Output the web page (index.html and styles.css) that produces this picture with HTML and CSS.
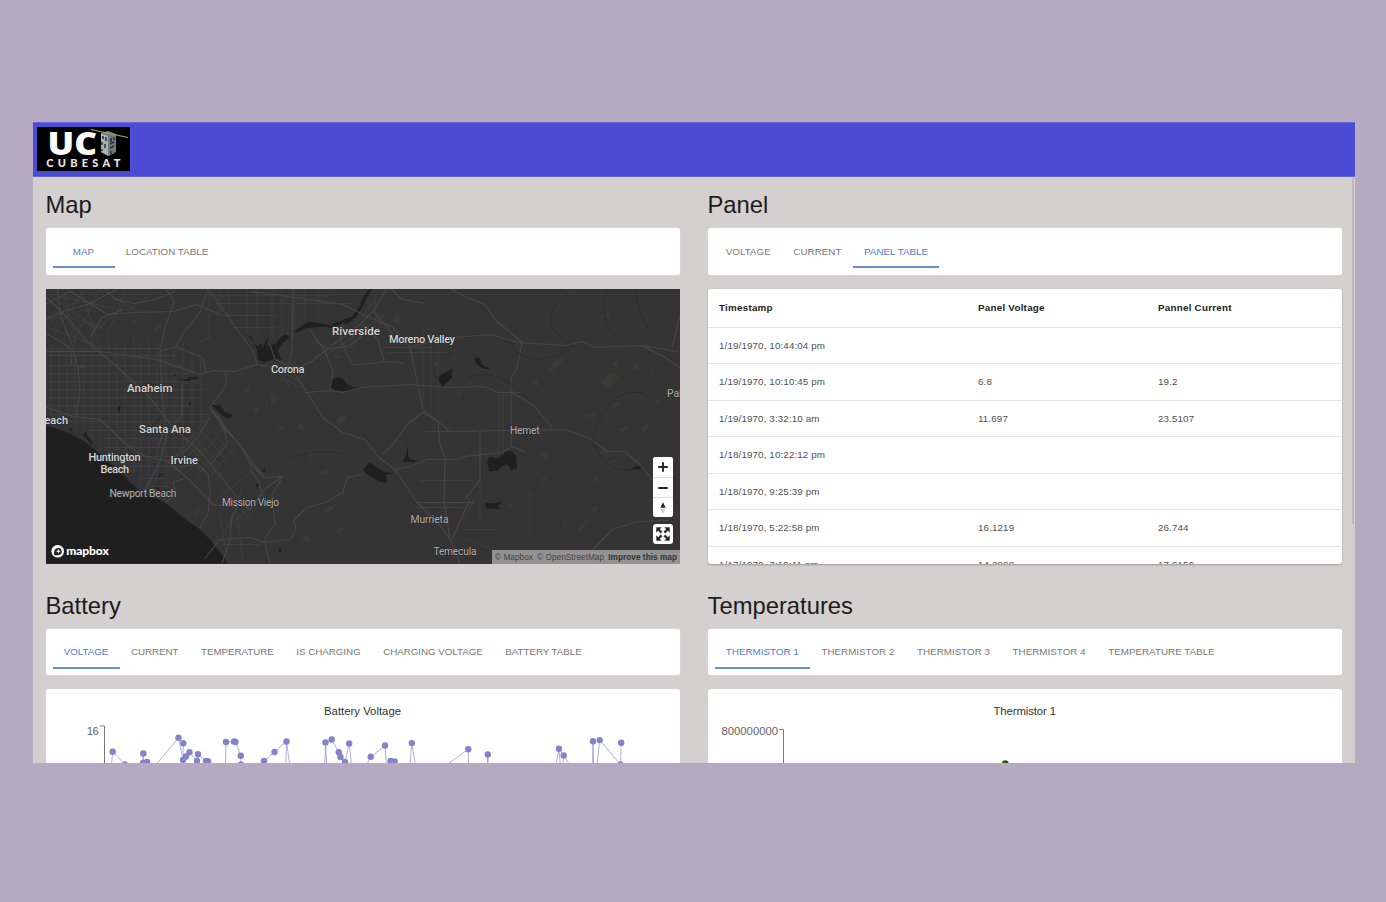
FILE: index.html
```html
<!DOCTYPE html>
<html lang="en">
<head>
<meta charset="utf-8">
<title>UCI CubeSat</title>
<link rel="stylesheet" href="styles.css">
</head>
<body>
<div class="app">
  <header class="topbar">
    <svg class="logo" viewBox="0 0 93 44">
      <rect width="93" height="44" fill="#000"/>
      <text class="logo-uc" x="10.500" y="27.500" textLength="49.500" lengthAdjust="spacingAndGlyphs">UC</text>
      <text class="logo-name" x="9.300" y="40" textLength="74">CUBESAT</text>
      <path d="M64 6l7-2 8 3v18l-7 4-8-4z" fill="#6d7b80"/>
      <path d="M64 6l7 3v20l-7-4z" fill="#a5b2af"/>
      <path d="M66 9v3m3-2v4m-4 1v3m3-1v4m-3 1v2m9-13v4m3-5v3m-4 4l4-2m-4 6l4-2m-3 5v3" stroke="#26322f" stroke-width="1.500"/>
      <path d="M54 2.500L91 10.500" stroke="#a8aa5b" stroke-width="1.200"/>
    </svg>
  </header>
  <main class="grid">
    <section class="panel">
      <h2>Map</h2>
      <nav class="tabs"><a class="tab active">Map</a><a class="tab">Location Table</a></nav>
      <div class="map">
        <svg class="map-art" viewBox="46 289.500 634.500 275" preserveAspectRatio="none">
          <rect x="45" y="288" width="637" height="278" fill="#343434"/>
          <g class="hills">
            <path d="M130 322l8-4-2 6zM152 330l10-6-5 9zM196 342l18-7-12 8zM243 390l8-5-3 9zM252 410l9-3-5 8zM270 398l4-6 3 9-5 6zM276 430l7-5 2 7zM296 428l5-6 4 9zM306 455l6-5 2 10-6-3zM316 475l10-7 4 6zM335 423l9-9 3 6-8 5zM300 540l8-4 2 7zM320 512l18-9-7 9zM335 530l11-3-7 8zM392 320l5-6 4 6-3 6zM433 365l9-6-5 9zM450 361l8-6-4 7z"/>
            <path d="M549 365l15-6-5 7zM530 385l5-7 5 8zM547 370l14-7-11 11zM596 320l12-8 4 5zM600 385l10-13 9 5-10 13zM585 416l15-4-7 6zM610 407l12-7-4 7zM616 430l14-4-6 6zM612 365l7-6-2 9zM632 371l4-10 4 9zM650 376l5-10-3 14zM538 455l10-2-2 7zM540 480l8-3-4 7zM562 525l6-7-3 11zM577 533l11-16-7 17zM588 509l12-3-5 6zM590 480l7-4 2 6zM598 452l9-4-2 7zM605 463l14-4-8 6zM640 430l9-7-4 10zM655 402l9-7-7 10z"/>
            <path d="M194 513l6-6-2 9zM181 526l6-6-2 8zM211 543l7-4-3 7zM280 370l7 3-6 4zM334 355l9 2-7 3zM455 394l9-5-4 7zM508 505l7-4-5 7z"/>
          </g>
          <g class="water">
            <path d="M45 425l25 9 15 8 18 15 16 15 21 20 25 11 18 15 17 12 11 11 17 23H45z"/>
            <path d="M66 427l3 4 3-4-1 6zM82 434l4-2 2 5 5 5-1 4zM117 410l4-6-2 10zM159 475l6-1-7 3-1 8 3 6 4 4-5-1-4-6 3-4zM178 379l8 1 5-3 8 1-8 3-7 1zM211 405l9 1 4 6 9 4-5 3-6-3-6-6zM173 376l2-3 1 4zM188 404l5-2-3 5zM155 422l5-4-4 7z"/>
            <path d="M248 336l4 2 2 6 4 3 3-4 2 5 5-12-1 11 7-3 4 3 5-5-5 9 1 4 3 6-5-2-4 1-9 3-6-3-1-10-4-8z"/>
            <path d="M275 347l3-6 6-6 4 1 1 3-6 4-5 5zM294 332l10-7 5-3 12 2 11 2v2l-15-1-11 2-9 4zM332 325l12-5 8-3 9-12 2 1-7 12-7 5-16 4z"/>
            <path d="M360 304l5-9 5-7 3 1-5 7-5 10z"/>
            <path d="M331 380l8-2 5 2 3 5 7 3 7-1-12 5-13-1-6-3zM436 378l16-9v9l-9 9zM475 359l4-1 4 8 8 4-8-1-7-5zM363 470l6-7 14 9 11 2-8 1 1 9-8-2-13-8zM402 463l4-7 2-11v12l3 3 7 1-5 2-10-1zM487 461l3-4 8 2 5-5 7-3 6 5 1 13-6 2-3-6-6 2-4 4-9 1zM485 503l10 1 7-2-4 5 2 3-14-1zM630 470l5-3 7-1-2 4zM278 550l4-1-2 5zM262 471l4-3-2 5zM256 485l3-2-2 7z"/>
          </g>
          <g class="streets">
            <path d="M47 349H160M45 356H175M45 366H183M45 374H190M45 382H198M45 390H206M45 398H201M45 406H195M45 415H208M69 422H205M83 431H193M100 439H190M101 448H185M110 457H179M124 467H180M138 479H170M151 487H168"/>
            <path d="M51 345V417M59 348V424M67 345V425M75 346V430M84 348V435M92 325V444M100 334V453M109 338V458M117 345V463M125 340V471M134 337V477M141 345V485M149 338V491M157 340V495M166 342V488M174 348V471M183 342V459M192 347V443M201 359V429"/>
            <path d="M178 449l28 28M185 442l27 30M192 435l28 31M199 429l25 29M174 458l31-37M181 465l32-36M188 472l30-36M195 479l29-36M203 486l28-34M217 437l20 21M218 472l12 12M47 294l48 34M50 323l40-34M54 336l30-47M73 343l27-53M91 337l47-46M127 311l33-22M107 336l19-47M55 296l60 13M54 312l52 18M46 327l55 21M63 289l13 54M82 293l16 50M100 290l42 24M221 489l30 32M217 500l32-26M229 526l15-42M236 530l20-22M207 296H330M215 304H350M220 316H277M232 328H276M209 289V340M219 289V317M229 289V318M247 289V334M257 289V333M272 289V340M282 289V336M294 289V331M305 289V323M318 289V323"/>
            <path d="M375 290v35M385 315l-65 45M382 348h50M388 353h60M423 325v85M431 338v78M438 343v78M425 432h51M420 481h52M416 508h46M499 390v65M503 389v67M480 455v70M497 393h28M530 490v50M461 523l20-33M465 530h30M467 540l24 10M220 516l8 48M236 508l7 56M225 530l35-30M222 545h38M283 372l18 12M280 378l22 10M275 366l15 22M355 325l20-25M368 300l12 20M380 320v15M332 348h20v-12"/>
          </g>
          <g class="roads">
            <path d="M47 298L67 318 90 345 117 367 150 398 173 428 200 452 227 485 240 502 232 517 230 540 222 564M45 407L73 417 100 420 123 442 140 455 167 462 187 478 213 505 237 508M45 352H100L157 360 180 368 200 375 213 371 235 372 257 365 285 370 300 367 310 363 360 325 373 312 387 288"/>
            <path d="M57 288L61 318 72 345 78 370 80 392 76 417M45 305L70 292 87 302 107 315 133 313 173 312 197 305 220 315M207 288L218 303 238 331 253 352 257 365M165 288L174 302 165 328 160 352 162 395 165 425 158 450M182 382V415L167 435 160 462 144 492M160 352L176 347 183 334 200 313 208 289M175 347L203 358 206 373M226 373L226 386 210 408 225 432 227 445 210 465M210 408L247 455 264 478 283 477 272 495 275 525 264 540 270 564M210 418L198 437 187 450 167 462M187 478L173 483 176 495 165 503M180 468l16-4 12 10 2 18-2 22-8 14M240 502l10 8 14-20 18-13M264 478L250 464 240 445 225 430 218 416"/>
            <path d="M105 289L115 300 135 304 155 300 175 292M45 320L63 312 87 305 117 290M45 333L70 348 72 366 86 368M91 336L102 318 123 310"/>
            <path d="M293 288L292 348 289 367 300 382 308 395 323 418 343 433 365 440 378 457 395 470 417 503 437 522 450 540 460 564M250 292L310 300 343 305 363 315 393 328 410 348 423 410 438 422 440 445 445 458 444 502 450 540M363 325L378 340 384 362M343 323L340 340 352 365 370 364 390 362 405 364M289 367L275 360 270 345"/>
            <path d="M305 393L330 391 343 393 360 388 410 385 447 388 485 387 498 393 512 393 535 407 552 428M310 330L325 352 333 372 330 391M382 455L393 445 407 425 423 413 438 422 450 432 508 431 565 430 588 438 608 452 625 452 642 467 652 480 678 517M395 470L410 467 427 460 457 460 465 457 502 453 512 447 525 452M465 297L485 305 495 320 522 343 517 368 511 378V448M410 348l28-8 17-2L490 335 518 343 565 346 582 342 595 348 642 346 678 352M642 346L665 358 681 369M593 550L612 530 638 522 668 521M672 348L680 315M465 500L480 480V435M417 503H475M452 540L463 515 470 500"/>
            <path d="M205 559L220 540 250 538 265 543 290 540 296 530 294 520 307 508 325 503 343 493 347 478 362 475M264 500L258 480 250 470M390 288L402 300 425 304M450 289L465 297M373 312L385 325 393 335M316 342L330 350 352 345 363 335"/>
          </g>
          <g class="terrain"><path d="M569 294q-23 16-17 35 12 12 22 19M608 289q-12 26 8 49M635 289q2 28 20 49M650 397q-38-19-58 43M570 350q-43 23-62-9M466 378q34-12 68 27M592 440q14 35 39 30M286 460q44-15 62-2"/></g>
          <g class="labels">
            <text x="332" y="335.500" textLength="48" lengthAdjust="spacingAndGlyphs">Riverside</text><text x="389" y="343" textLength="66">Moreno Valley</text>
            <text x="271" y="373" textLength="33.500">Corona</text><text x="127" y="392.500" textLength="45.500" lengthAdjust="spacingAndGlyphs">Anaheim</text>
            <text x="139" y="433.500" textLength="52" lengthAdjust="spacingAndGlyphs">Santa Ana</text><text x="44.500" y="424" textLength="23.500">each</text>
            <text x="88.500" y="461.500" textLength="52">Huntington</text><text x="100.500" y="473" textLength="28.500">Beach</text>
            <text x="170.500" y="464" textLength="27.500">Irvine</text>
            <g class="minor"><text x="109.500" y="497" textLength="67">Newport Beach</text><text x="222" y="506.500" textLength="57">Mission Viejo</text>
            <text x="510" y="434" textLength="29.500">Hemet</text><text x="410.500" y="523.500" textLength="38">Murrieta</text><text x="433.500" y="555" textLength="43">Temecula</text><text x="667" y="397">Pal</text></g>
          </g>
          <circle cx="57.700" cy="551.800" r="6.300" fill="#fff"/><path d="M54.200 555.700c-.6-4.200.8-7.100 4.100-7.100 2 0 3.500 1.500 3.500 3.400 0 3.200-3.400 4.300-7.600 3.700z" fill="#222"/><path d="M58.400 549.400l.7 1.600 1.600.7-1.600.7-.7 1.600-.7-1.600-1.600-.7 1.600-.7z" fill="#fff"/>
          <text class="brand" x="66.300" y="555.500" textLength="42.500">mapbox</text>
        </svg>
        <div class="controls">
          <div class="zoomset">
            <button aria-label="Zoom in"><svg viewBox="0 0 20 20"><path d="M10 6v8M6 10h8" stroke="#222" stroke-width="1.900" stroke-linecap="round"/></svg></button>
            <button aria-label="Zoom out"><svg viewBox="0 0 20 20"><path d="M6 10h8" stroke="#222" stroke-width="1.900" stroke-linecap="round"/></svg></button>
            <button aria-label="Reset bearing"><svg viewBox="0 0 20 20"><path d="M7.300 9.700L10 4.300l2.700 5.400z" fill="#222"/><path d="M7.300 10.700l2.700 5.200 2.700-5.200z" fill="#ccc"/></svg></button>
          </div>
          <button class="full" aria-label="Full screen"><svg viewBox="0 0 20 20"><path d="M3.500 8.200V3.500h4.700L6.600 5.200l2.600 2.600-1.400 1.400-2.600-2.600zM11.800 3.500h4.700v4.700l-1.700-1.600-2.600 2.600-1.400-1.400 2.600-2.600zM3.500 11.800v4.700h4.700l-1.600-1.700 2.600-2.600-1.400-1.400-2.600 2.600zM11.800 16.500h4.700v-4.700l-1.700 1.600-2.600-2.600-1.400 1.400 2.600 2.600z" fill="#222" stroke="#222" stroke-width=".4"/></svg></button>
        </div>
        <div class="credit"><span>© Mapbox</span> <span>© OpenStreetMap</span> <b>Improve this map</b></div>
      </div>
    </section>
    <section class="panel">
      <h2>Panel</h2>
      <nav class="tabs"><a class="tab">Voltage</a><a class="tab">Current</a><a class="tab active">Panel Table</a></nav>
      <div class="table-card">
        <table>
          <thead><tr><th class="time">Timestamp</th><th class="volt">Panel Voltage</th><th>Pannel Current</th></tr></thead>
          <tbody>
            <tr><td>1/19/1970, 10:44:04 pm</td><td></td><td></td></tr>
            <tr><td>1/19/1970, 10:10:45 pm</td><td>6.8</td><td>19.2</td></tr>
            <tr><td>1/19/1970, 3:32:10 am</td><td>11.697</td><td>23.5107</td></tr>
            <tr><td>1/18/1970, 10:22:12 pm</td><td></td><td></td></tr>
            <tr><td>1/18/1970, 9:25:39 pm</td><td></td><td></td></tr>
            <tr><td>1/18/1970, 5:22:58 pm</td><td>16.1219</td><td>26.744</td></tr>
            <tr><td>1/17/1970, 7:19:11 pm</td><td>14.2998</td><td>17.6159</td></tr>
          </tbody>
        </table>
      </div>
    </section>
    <section class="panel">
      <h2>Battery</h2>
      <nav class="tabs dense"><a class="tab active">Voltage</a><a class="tab">Current</a><a class="tab">Temperature</a><a class="tab">Is Charging</a><a class="tab">Charging Voltage</a><a class="tab">Battery Table</a></nav>
      <div class="chart">
        <svg viewBox="46 689.500 634.500 100">
          <text class="chart-title" x="324" y="715" textLength="77">Battery Voltage</text>
          <text class="axis-label" x="86.700" y="735.500" textLength="12">16</text>
          <path class="axis" d="M100 726.500h4.500V800"/>
          <path class="series" d="M109 790L112.700 752.300 125 765M141 790L143.300 754 143 763.500 147 762.500 152 775M152 770L178.500 738.300 183.300 743.800 183 760.500 186 757 189.500 752.700 197 761.500 198 754.700 206 761.500 208 761.700 215 775M178.500 738.300L183 760.500M225 790L226 742.500 234 742 235.500 742.500 240.800 756.300 241 765M250 775L264 761.500 274.500 752.500 286.500 742 291 775M285 790L286.500 742M324 790L325.500 743 331.700 740 338.800 752.800 340.500 757.500 345 762.500 349.200 744 353 780M325.500 743L328 790M362 775L370.700 757.300 385 746 387 775M388 765L390.500 761.500 394.700 762M408 790L411.800 743.600 417 775M440 770L468.300 749.800 469 790M487 790L487.800 755 488.500 790M554 775L559 749.200 561 775M559 749.200L563.700 755.900 575 774M562 775L563.700 755.900M592 790L593 741.800 594.500 790M596 775L599.700 740.600 620.500 765 621.200 743.200"/>
          <g class="dots"><circle cx="112.700" cy="752.300" r="3.200"/><circle cx="125" cy="765" r="3.200"/><circle cx="143.300" cy="754" r="3.200"/><circle cx="143" cy="763.500" r="3.200"/><circle cx="147" cy="762.500" r="3.200"/><circle cx="178.500" cy="738.300" r="3.200"/><circle cx="183.300" cy="743.800" r="3.200"/><circle cx="183" cy="760.500" r="3.200"/><circle cx="186" cy="757" r="3.200"/><circle cx="189.500" cy="752.700" r="3.200"/><circle cx="198" cy="754.700" r="3.200"/><circle cx="197" cy="761.500" r="3.200"/><circle cx="206" cy="761.500" r="3.200"/><circle cx="208" cy="761.700" r="3.200"/><circle cx="226" cy="742.500" r="3.200"/><circle cx="234" cy="742" r="3.200"/><circle cx="235.500" cy="742.500" r="3.200"/><circle cx="240.800" cy="756.300" r="3.200"/><circle cx="241" cy="765" r="3.200"/><circle cx="264" cy="761.500" r="3.200"/><circle cx="274.500" cy="752.500" r="3.200"/><circle cx="286.500" cy="742" r="3.200"/><circle cx="325.500" cy="743" r="3.200"/><circle cx="331.700" cy="740" r="3.200"/><circle cx="338.800" cy="752.800" r="3.200"/><circle cx="340.500" cy="757.500" r="3.200"/><circle cx="345" cy="762.500" r="3.200"/><circle cx="349.200" cy="744" r="3.200"/><circle cx="370.700" cy="757.300" r="3.200"/><circle cx="385" cy="746" r="3.200"/><circle cx="390.500" cy="761.500" r="3.200"/><circle cx="394.700" cy="762" r="3.200"/><circle cx="411.800" cy="743.600" r="3.200"/><circle cx="468.300" cy="749.800" r="3.200"/><circle cx="487.800" cy="755" r="3.200"/><circle cx="559" cy="749.200" r="3.200"/><circle cx="563.700" cy="755.900" r="3.200"/><circle cx="593" cy="741.800" r="3.200"/><circle cx="599.700" cy="740.600" r="3.200"/><circle cx="621.200" cy="743.200" r="3.200"/><circle cx="620.500" cy="765" r="3.200"/></g>
        </svg>
      </div>
    </section>
    <section class="panel">
      <h2>Temperatures</h2>
      <nav class="tabs"><a class="tab active">Thermistor 1</a><a class="tab">Thermistor 2</a><a class="tab">Thermistor 3</a><a class="tab">Thermistor 4</a><a class="tab">Temperature Table</a></nav>
      <div class="chart">
        <svg viewBox="708 689.500 634.500 100">
          <text class="chart-title" x="993.500" y="715" textLength="62.500">Thermistor 1</text>
          <text class="axis-label" x="721.500" y="735.500" textLength="56.500">800000000</text>
          <path class="axis" d="M779.500 730h4V800"/>
          <circle cx="1005.300" cy="764" r="3.300" fill="#285c14"/>
        </svg>
      </div>
    </section>
  </main>
  <div class="scroll-thumb"></div>
</div>
</body>
</html>
```

FILE: styles.css
```css
* { box-sizing: border-box; }
body { margin: 0; height: 902px; overflow: hidden; padding: 122px 31px 139px 33px; background: #b6a9c2; font-family: "Liberation Sans", Arial, sans-serif; }
.app { position: relative; width: 1322px; height: 641px; overflow: hidden; background: #d4d0cf; }
.topbar { height: 55px; padding: 4px; background: #4a4dd3; border: solid #6668d6; border-width: 1px 0 1px; }
.logo { display: block; width: 93px; height: 44px; }
.logo-uc { font: 800 31px "Open Sans", sans-serif; fill: #fff; }
.logo-name { font: 900 11px Lato, sans-serif; fill: #e8e8e8; }
.grid { display: grid; grid-template-columns: 634.500px 634.500px; column-gap: 27.500px; padding-left: 12.500px; }
.panel { height: 400.800px; min-width: 0; }
h2 { margin: 0; height: 51px; padding-top: 13.300px; font-size: 23.800px; line-height: 29px; font-weight: 400; color: #1c1b1b; }
.tabs { display: flex; height: 46.500px; padding: 6.500px 7px; border-radius: 3px; background: #fff; box-shadow: 0 0 1px #fff; }
.tab { height: 33.700px; min-width: 62px; padding: 0 11.300px; border-bottom: 2px solid transparent; text-align: center; text-transform: uppercase; white-space: nowrap; font-size: 9.800px; line-height: 34px; letter-spacing: .02px; color: #777; }
.dense .tab { letter-spacing: -.05px; }
.tab.active { color: #537bd4; border-color: #6a8dda; }
.map, .table-card, .chart { margin-top: 14px; height: 275px; }
.map { position: relative; overflow: hidden; }
.map-art { display: block; width: 100%; height: 100%; }
.hills { fill: #3a3a39; }
.water { fill: #1f1f1f; }
.streets { fill: none; stroke: #444446; stroke-width: .7; }
.roads { fill: none; stroke: #47474a; stroke-width: 1.100; stroke-linejoin: round; }
.terrain { fill: none; stroke: #2b2b2b; stroke-width: .8; }
.labels { font: 500 11px Roboto, sans-serif; fill: #d5d5d5; stroke: #2b2b2b; stroke-width: 1.200px; paint-order: stroke; }
.minor { font-size: 10.300px; font-weight: 400; fill: #b0b0b0; }
.brand { font: 900 12px Lato, sans-serif; fill: #fff; }
.controls { position: absolute; right: 7px; bottom: 20px; display: grid; gap: 7px; width: 20px; }
.zoomset { overflow: hidden; border-radius: 3px; background: #fff; }
button { display: block; width: 20px; height: 20px; padding: 0; border: 0; background: #fff; }
.zoomset button + button { border-top: 1px solid #ddd; }
button svg { display: block; width: 20px; height: 20px; }
.full { border-radius: 3px; }
.credit { position: absolute; right: 0; bottom: 0; width: 188px; height: 14px; padding: 0 3px; display: flex; justify-content: space-between; background: #929292; color: #444; font-size: 8.300px; line-height: 14px; white-space: nowrap; }
.credit b { color: #333; }
.table-card { overflow: hidden; border-radius: 3px; background: #fff; box-shadow: 0 1px 2px #7779; }
table { width: 100%; table-layout: fixed; border-collapse: separate; border-spacing: 0; }
th, td { height: 36.500px; padding: 0 11.500px; border-bottom: 1px solid #e4e4e4; text-align: left; font-size: 9.800px; letter-spacing: .12px; color: #505050; }
th { height: 39px; color: #222; letter-spacing: .25px; }
.time { width: 259px; }
.volt { width: 180px; }
.chart { overflow: hidden; border-radius: 3px; background: #fff; }
.chart svg { display: block; width: 634.500px; height: 100px; }
.chart-title { font-size: 11.300px; fill: #333; }
.axis-label { font-size: 11.300px; fill: #666; }
.axis { fill: none; stroke: #777; stroke-width: 1; }
.series { fill: none; stroke: #8884c8; stroke-width: .65; }
.dots { fill: #8582ca; }
.scroll-thumb { position: absolute; right: 1px; top: 56px; width: 2px; height: 346px; background: #bbb9ba; }
```
